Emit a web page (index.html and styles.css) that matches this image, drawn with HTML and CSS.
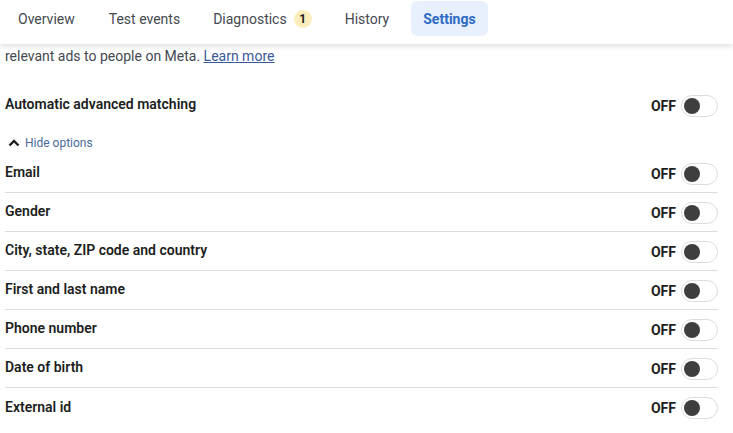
FILE: index.html
```html
<!DOCTYPE html>
<html>
<head>
<meta charset="utf-8">
<link rel="stylesheet" href="styles.css">
</head>
<body>
<div class="tabs">
  <div class="tab">Overview</div>
  <div class="tab">Test events</div>
  <div class="tab">Diagnostics<span class="badge">1</span></div>
  <div class="tab">History</div>
  <div class="tab active">Settings</div>
</div>
<div class="content">
  <p class="desc">relevant ads to people on Meta. <a href="#" class="link">Learn more</a></p>
  <div class="main-row">
    <span class="label">Automatic advanced matching</span>
    <div class="switch"><span class="off">OFF</span><span class="toggle"><span class="knob"></span></span></div>
  </div>
  <div class="hide">
    <svg class="chev" width="12" height="8" viewBox="0 0 12 8"><path d="M1.5 6.5 L6 2 L10.5 6.5" fill="none" stroke="#1c1e21" stroke-width="2.4"/></svg>
    <span>Hide options</span>
  </div>
  <div class="list">
    <div class="row"><span class="label">Email</span><div class="switch"><span class="off">OFF</span><span class="toggle"><span class="knob"></span></span></div></div>
    <div class="row"><span class="label">Gender</span><div class="switch"><span class="off">OFF</span><span class="toggle"><span class="knob"></span></span></div></div>
    <div class="row"><span class="label">City, state, ZIP code and country</span><div class="switch"><span class="off">OFF</span><span class="toggle"><span class="knob"></span></span></div></div>
    <div class="row"><span class="label">First and last name</span><div class="switch"><span class="off">OFF</span><span class="toggle"><span class="knob"></span></span></div></div>
    <div class="row"><span class="label">Phone number</span><div class="switch"><span class="off">OFF</span><span class="toggle"><span class="knob"></span></span></div></div>
    <div class="row"><span class="label">Date of birth</span><div class="switch"><span class="off">OFF</span><span class="toggle"><span class="knob"></span></span></div></div>
    <div class="row last"><span class="label">External id</span><div class="switch"><span class="off">OFF</span><span class="toggle"><span class="knob"></span></span></div></div>
  </div>
</div>
</body>
</html>
```
FILE: styles.css
```css
* { box-sizing: border-box; }
html, body { margin: 0; padding: 0; background: #fff; }
body { font-family: Roboto, "Noto Sans", Arial, sans-serif; color: #1c1e21; width: 733px; height: 433px; overflow: hidden; }

.tabs {
  position: relative;
  z-index: 2;
  height: 44px;
  display: flex;
  align-items: flex-start;
  padding: 1px 0 0 6px;
  gap: 10px;
  background: #fff;
  box-shadow: 0 2px 6px rgba(0,0,0,0.14);
}
.tab {
  height: 35px;
  padding: 0 12px;
  display: flex;
  align-items: center;
  font-size: 14px;
  color: #444950;
  border-radius: 6px;
}
.tab:nth-child(2) { margin-right: -1px; }
.tab:nth-child(3) { margin-right: -1px; }
.tab.active { background: #e7f0fc; color: #2d6bc4; font-weight: 700; }
.badge {
  display: inline-flex;
  align-items: center;
  justify-content: center;
  width: 18px;
  height: 18px;
  margin-left: 7px;
  border-radius: 50%;
  background: #fdedbd;
  color: #1c1e21;
  font-size: 12px;
  font-weight: 700;
}

.content { padding: 0 15px 0 5px; }
.desc {
  margin: 0;
  padding-top: 2px;
  font-size: 14px;
  line-height: 20px;
  color: #444950;
}
.link { color: #385898; text-decoration: underline; }

.label { font-size: 14px; font-weight: 600; color: #1c1e21; }
.main-row {
  margin-top: 27px;
  height: 22px;
  display: flex;
  align-items: center;
  justify-content: space-between;
}
.main-row .switch { margin-top: 4px; }

.hide {
  margin-top: 20px;
  display: flex;
  align-items: center;
  gap: 5px;
  font-size: 12px;
  color: #4b6a9b;
  padding-left: 3px;
  height: 16px;
}
.chev { display: block; }

.list { margin-top: 3px; }
.row {
  height: 39px;
  display: flex;
  align-items: center;
  justify-content: space-between;
  border-bottom: 1px solid #dadde1;
}
.row .label { margin-top: -2px; }
.row .switch { margin-top: 1px; }
.row.last { border-bottom: none; }

.switch { display: flex; align-items: center; gap: 5px; }
.off { font-size: 14px; font-weight: 700; color: #1c1e21; }
.toggle {
  width: 37px;
  height: 22px;
  border: 1px solid #dadde1;
  border-radius: 11px;
  background: #fff;
  display: flex;
  align-items: center;
  padding-left: 2px;
}
.knob { width: 16px; height: 16px; border-radius: 50%; background: #3e3e3e; }
```
